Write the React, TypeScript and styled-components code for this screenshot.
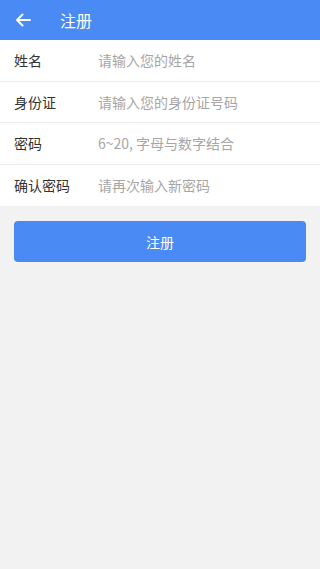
import React from "react";
import styled, { createGlobalStyle } from "styled-components";

const GlobalStyle = createGlobalStyle`
  html, body {
    margin: 0;
    padding: 0;
    background: #f2f2f2;
    font-family: "Noto Sans CJK SC", "Noto Sans", sans-serif;
  }
  * { box-sizing: border-box; }
`;

const Page = styled.div`
  min-height: 569px;
  background: #f2f2f2;
`;

const Header = styled.header`
  height: 40px;
  background: #4a8af4;
  display: flex;
  align-items: center;
  padding-left: 14px;
  color: #fff;
`;

const BackButton = styled.button`
  background: none;
  border: none;
  padding: 0;
  width: 18px;
  height: 18px;
  display: flex;
  align-items: center;
  justify-content: center;
  cursor: pointer;
`;

const Title = styled.h1`
  margin: 0 0 0 28px;
  font-size: 16px;
  font-weight: 400;
  line-height: 1;
`;

const Form = styled.div`
  background: #fff;
`;

const Row = styled.label`
  display: flex;
  align-items: center;
  height: 41.5px;
  padding: 0 14px;
  border-bottom: 1px solid #ececec;

  &:last-child {
    border-bottom: none;
  }
`;

const Label = styled.span`
  width: 84px;
  flex-shrink: 0;
  font-size: 14px;
  color: #333;
`;

const Input = styled.input`
  flex: 1;
  min-width: 0;
  border: none;
  outline: none;
  background: transparent;
  font-family: inherit;
  font-size: 14px;
  color: #333;
  padding: 0;

  &::placeholder {
    color: #a6a6a6;
  }
`;

const SubmitButton = styled.button`
  display: block;
  margin: 15px 14px 0;
  width: calc(100% - 28px);
  height: 41px;
  border: none;
  border-radius: 4px;
  background: #4a8af4;
  color: #fff;
  font-family: inherit;
  font-size: 14px;
  cursor: pointer;
`;

const fields = [
  { label: "姓名", placeholder: "请输入您的姓名" },
  { label: "身份证", placeholder: "请输入您的身份证号码" },
  { label: "密码", placeholder: "6~20, 字母与数字结合" },
  { label: "确认密码", placeholder: "请再次输入新密码" },
];

export default function App() {
  return (
    <Page>
      <GlobalStyle />
      <Header>
        <BackButton aria-label="返回">
          <svg width="16" height="14" viewBox="0 0 16 14" fill="none">
            <path
              d="M15 7H2M7.5 1.5L2 7l5.5 5.5"
              stroke="#fff"
              strokeWidth="2"
              strokeLinecap="round"
              strokeLinejoin="round"
            />
          </svg>
        </BackButton>
        <Title>注册</Title>
      </Header>
      <Form>
        {fields.map((f) => (
          <Row key={f.label}>
            <Label>{f.label}</Label>
            <Input type="text" placeholder={f.placeholder} />
          </Row>
        ))}
      </Form>
      <SubmitButton>注册</SubmitButton>
    </Page>
  );
}
